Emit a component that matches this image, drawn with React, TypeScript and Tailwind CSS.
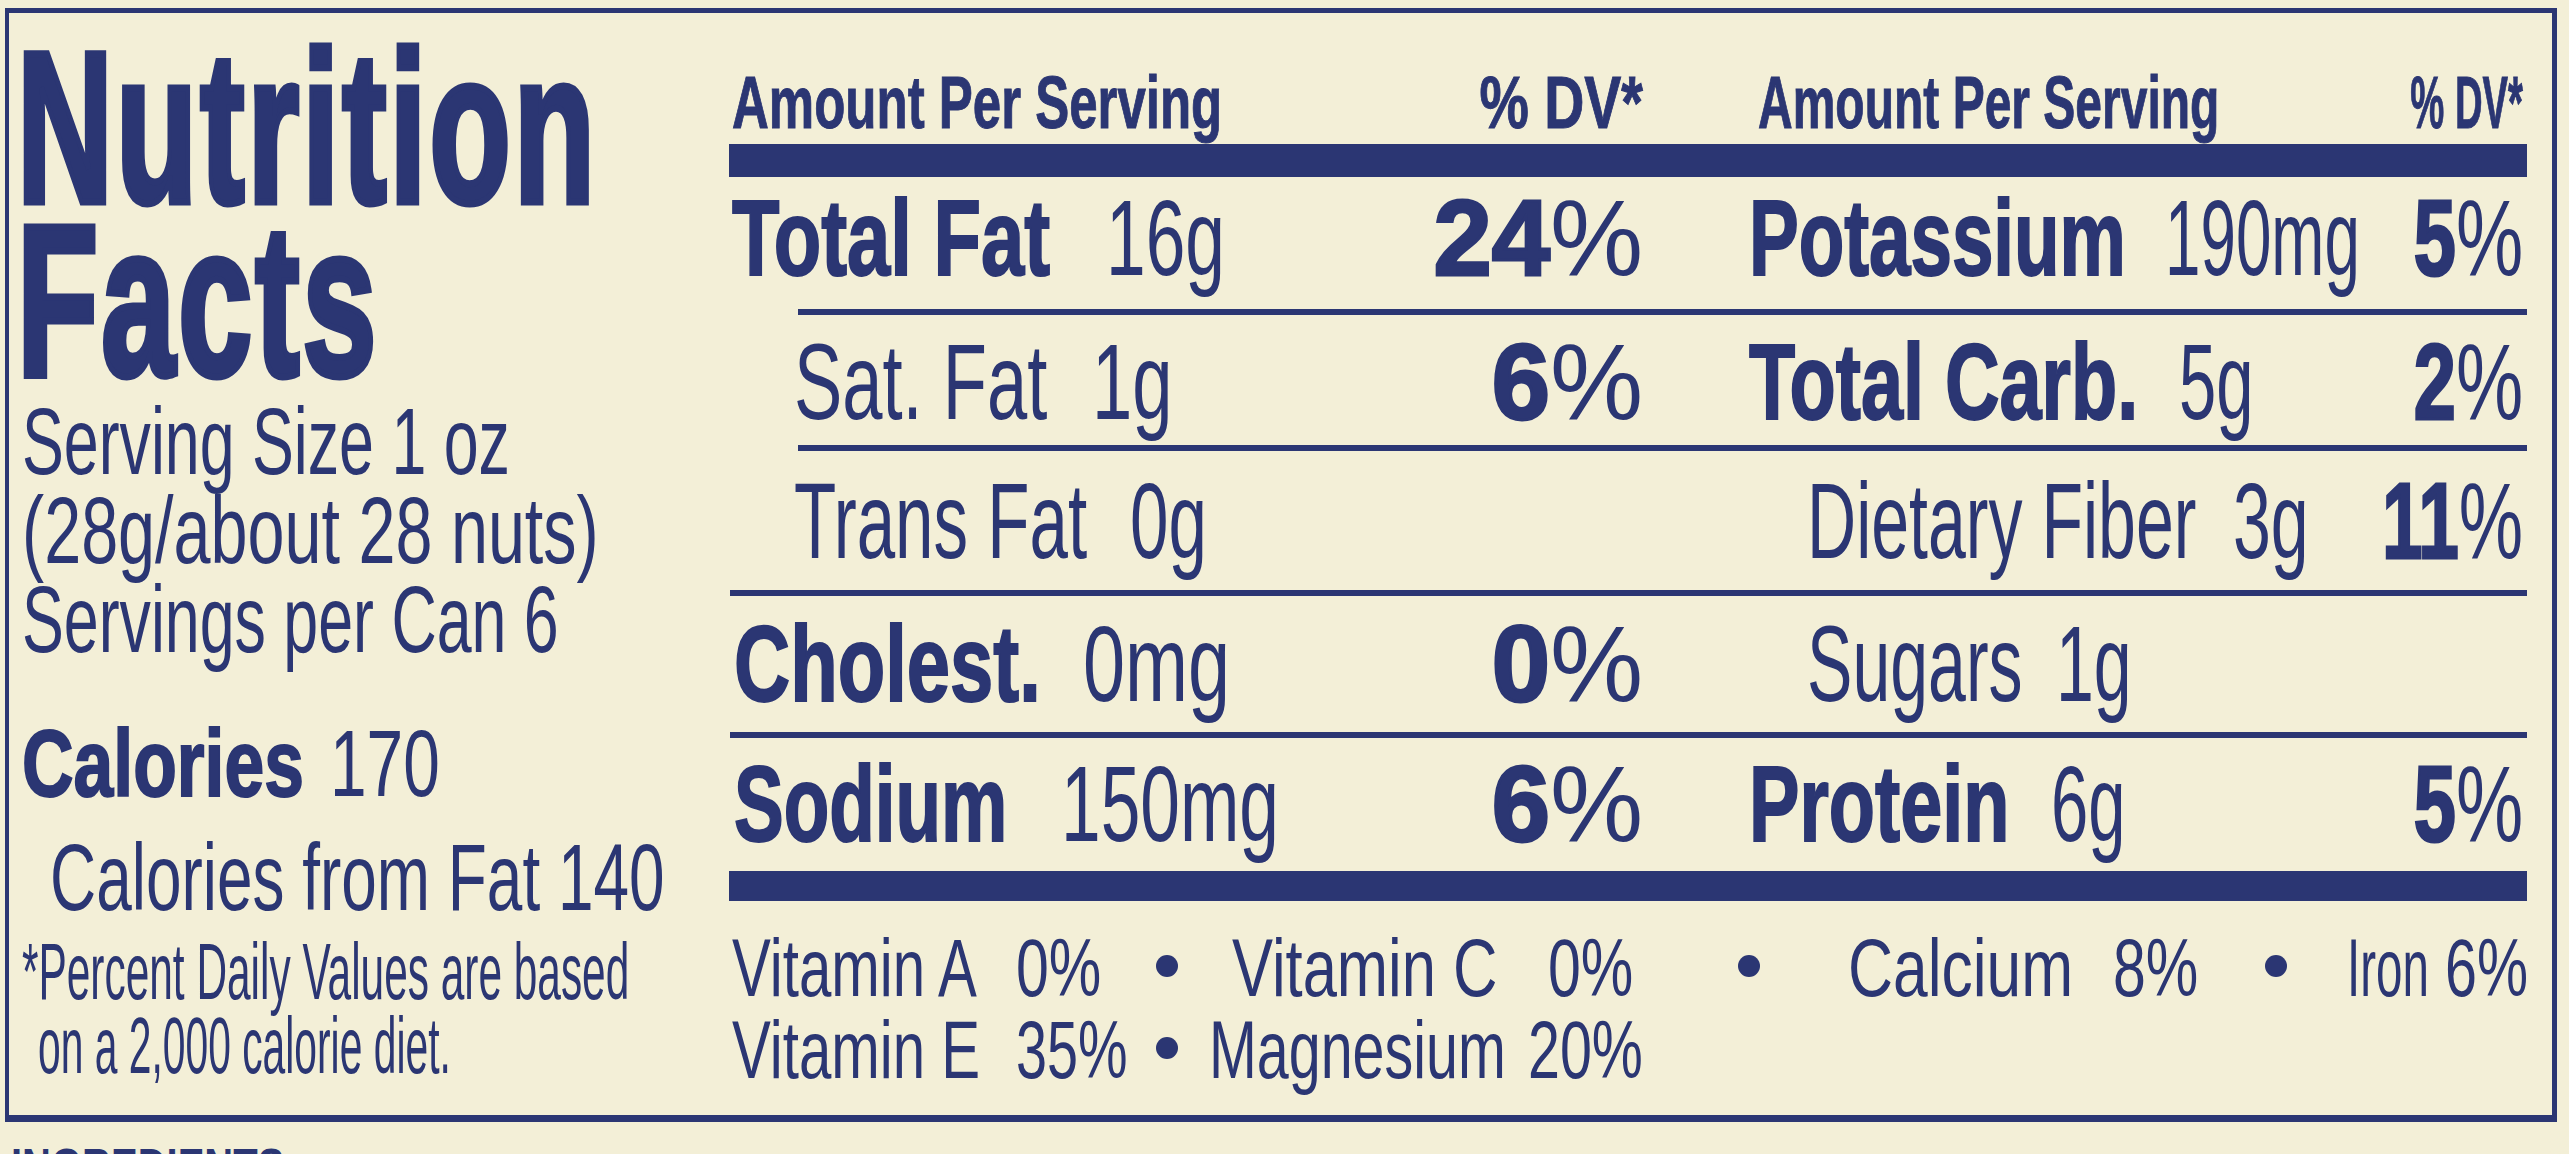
import type { ReactNode } from "react"

type SqProps = {
  w?: string
  sx: string
  right?: boolean
  className?: string
  children: ReactNode
}

// condensed print: text squeezed sideways inside a fixed slot
function Sq({ w = "", sx, right = false, className = "", children }: SqProps) {
  return (
    <span className={`inline-flex shrink-0 ${right ? "justify-end" : ""} ${w}`}>
      <span className={`inline-block whitespace-nowrap ${right ? "origin-right" : "origin-left"} ${sx} ${className}`}>
        {children}
      </span>
    </span>
  )
}

function Pct({ v, sx }: { v: string; sx: string }) {
  return (
    <Sq right w="ml-auto w-0" sx={sx}>
      <span className="font-bold [-webkit-text-stroke:3px_#2b3673]">{v}</span>%
    </Sq>
  )
}

function Row({ h, children }: { h: string; children: ReactNode }) {
  return (
    <div className={`grid grid-cols-[914px_779px] gap-x-[105px] items-end text-[108px] leading-none ${h}`}>
      {children}
    </div>
  )
}

function Rule({ indent = false }: { indent?: boolean }) {
  return <div className={`h-[6px] bg-[#2b3673] ${indent ? "ml-[69px]" : "ml-[1px]"}`} />
}

function Dot({ w }: { w: string }) {
  return (
    <span className={`shrink-0 ${w}`}>
      <span className="inline-block w-[22px] h-[22px] ml-[4px] mb-[19px] rounded-full bg-[#2b3673]" />
    </span>
  )
}

const heavy = "font-bold [-webkit-text-stroke:2px_#2b3673]"

export default function App() {
  return (
    <div className="w-[2569px] h-[1154px] overflow-hidden bg-[#f3efd7] text-[#2b3673] font-['Liberation_Sans',Arial,sans-serif] pt-[8px] pl-[5px]">
      <div className="flex w-[2552px] h-[1114px] border-t-[5px] border-l-[4px] border-r-[5px] border-b-[7px] border-[#2b3673]">
        {/* left column */}
        <div className="w-[720px] shrink-0 pl-[8px] pt-[28px]">
          <div className="text-[216px] leading-[173px] font-bold tracking-[5px] [-webkit-text-stroke:7px_#2b3673]">
            <div><Sq sx="scale-x-[0.615]">Nutrition</Sq></div>
            <div><Sq sx="scale-x-[0.615]">Facts</Sq></div>
          </div>
          <div className="mt-[10px] pl-[5px] text-[95px] leading-[89px]">
            <div><Sq sx="scale-x-[0.66]">Serving Size 1 oz</Sq></div>
            <div><Sq sx="scale-x-[0.70]">(28g/about 28 nuts)</Sq></div>
            <div><Sq sx="scale-x-[0.66]">Servings per Can 6</Sq></div>
          </div>
          <div className="mt-[55px] pl-[5px] text-[94px] leading-[89px]">
            <div className="flex items-baseline">
              <Sq w="w-[308px]" sx="scale-x-[0.76]" className={heavy}>Calories</Sq>
              <Sq sx="scale-x-[0.70]">170</Sq>
            </div>
          </div>
          <div className="mt-[25px] pl-[33px] text-[94px] leading-[89px]">
            <Sq sx="scale-x-[0.68]">Calories from Fat 140</Sq>
          </div>
          <div className="mt-[13px] pl-[5px] text-[80px] leading-[74px]">
            <div><Sq sx="scale-x-[0.53]">*Percent Daily Values are based</Sq></div>
            <div className="pl-[16px]"><Sq sx="scale-x-[0.51]">on a 2,000 calorie diet.</Sq></div>
          </div>
        </div>

        {/* amounts */}
        <div className="w-[1798px] shrink-0 flex flex-col">
          <div className="grid grid-cols-[914px_779px] gap-x-[105px] items-end h-[131px] pb-[4px] text-[75px] leading-none font-bold [-webkit-text-stroke:1px_#2b3673]">
            <div className="flex items-baseline pl-[3px]">
              <Sq w="w-[500px]" sx="scale-x-[0.68]">Amount Per Serving</Sq>
              <Sq right w="ml-auto w-0" sx="scale-x-[0.74]">% DV*</Sq>
            </div>
            <div className="flex items-baseline pl-[10px] pr-[4px]">
              <Sq w="w-[470px]" sx="scale-x-[0.64]">Amount Per Serving</Sq>
              <Sq right w="ml-auto w-0" sx="scale-x-[0.51]">% DV*</Sq>
            </div>
          </div>
          <div className="h-[33px] bg-[#2b3673]" />

          <Row h="h-[132px] pb-[17px]">
            <div className="flex items-baseline pl-[3px]">
              <Sq w="w-[374px]" sx="scale-x-[0.72]" className={heavy}>Total Fat</Sq>
              <Sq sx="scale-x-[0.66]">16g</Sq>
              <Pct v="24" sx="scale-x-[0.97]" />
            </div>
            <div className="flex items-baseline pl-[1px] pr-[4px]">
              <Sq w="w-[416px]" sx="scale-x-[0.69]" className={heavy}>Potassium</Sq>
              <Sq sx="scale-x-[0.59]">190mg</Sq>
              <Pct v="5" sx="scale-x-[0.70]" />
            </div>
          </Row>
          <Rule indent />

          <Row h="h-[130px] pb-[9px]">
            <div className="flex items-baseline pl-[65px]">
              <Sq w="w-[298px]" sx="scale-x-[0.67]">Sat. Fat</Sq>
              <Sq sx="scale-x-[0.67]">1g</Sq>
              <Pct v="6" sx="scale-x-[0.97]" />
            </div>
            <div className="flex items-baseline pl-[1px] pr-[4px]">
              <Sq w="w-[430px]" sx="scale-x-[0.70]" className={heavy}>Total Carb.</Sq>
              <Sq sx="scale-x-[0.62]">5g</Sq>
              <Pct v="2" sx="scale-x-[0.70]" />
            </div>
          </Row>
          <Rule indent />

          <Row h="h-[139px] pb-[15px]">
            <div className="flex items-baseline pl-[65px]">
              <Sq w="w-[336px]" sx="scale-x-[0.64]">Trans Fat</Sq>
              <Sq sx="scale-x-[0.64]">0g</Sq>
            </div>
            <div className="flex items-baseline pl-[59px] pr-[4px]">
              <Sq w="w-[426px]" sx="scale-x-[0.63]">Dietary Fiber</Sq>
              <Sq sx="scale-x-[0.63]">3g</Sq>
              <Pct v="11" sx="scale-x-[0.67]" />
            </div>
          </Row>
          <Rule />

          <Row h="h-[136px] pb-[14px]">
            <div className="flex items-baseline pl-[5px]">
              <Sq w="w-[349px]" sx="scale-x-[0.72]" className={heavy}>Cholest.</Sq>
              <Sq sx="scale-x-[0.70]">0mg</Sq>
              <Pct v="0" sx="scale-x-[0.97]" />
            </div>
            <div className="flex items-baseline pl-[59px] pr-[4px]">
              <Sq w="w-[249px]" sx="scale-x-[0.63]">Sugars</Sq>
              <Sq sx="scale-x-[0.63]">1g</Sq>
            </div>
          </Row>
          <Rule />

          <Row h="h-[133px] pb-[13px]">
            <div className="flex items-baseline pl-[5px]">
              <Sq w="w-[327px]" sx="scale-x-[0.69]" className={heavy}>Sodium</Sq>
              <Sq sx="scale-x-[0.66]">150mg</Sq>
              <Pct v="6" sx="scale-x-[0.97]" />
            </div>
            <div className="flex items-baseline pl-[1px] pr-[4px]">
              <Sq w="w-[302px]" sx="scale-x-[0.70]" className={heavy}>Protein</Sq>
              <Sq sx="scale-x-[0.62]">6g</Sq>
              <Pct v="5" sx="scale-x-[0.70]" />
            </div>
          </Row>
          <div className="h-[30px] bg-[#2b3673]" />

          <div className="mt-[26px] text-[82px] leading-[82px]">
            <div className="flex items-baseline pl-[3px]">
              <Sq w="w-[284px]" sx="scale-x-[0.71]">Vitamin A</Sq>
              <Sq w="w-[136px]" sx="scale-x-[0.72]">0%</Sq>
              <Dot w="w-[80px]" />
              <Sq w="w-[316px]" sx="scale-x-[0.75]">Vitamin C</Sq>
              <Sq w="w-[186px]" sx="scale-x-[0.72]">0%</Sq>
              <Dot w="w-[114px]" />
              <Sq w="w-[265px]" sx="scale-x-[0.76]">Calcium</Sq>
              <Sq w="w-[148px]" sx="scale-x-[0.72]">8%</Sq>
              <Dot w="w-[86px]" />
              <Sq w="w-[98px]" sx="scale-x-[0.58]">Iron</Sq>
              <Sq sx="scale-x-[0.70]">6%</Sq>
            </div>
            <div className="flex items-baseline pl-[3px]">
              <Sq w="w-[284px]" sx="scale-x-[0.71]">Vitamin E</Sq>
              <Sq w="w-[136px]" sx="scale-x-[0.68]">35%</Sq>
              <Dot w="w-[57px]" />
              <Sq w="w-[319px]" sx="scale-x-[0.70]">Magnesium</Sq>
              <Sq sx="scale-x-[0.70]">20%</Sq>
            </div>
          </div>
        </div>
      </div>
      <div className="mt-[20px] pl-[6px] text-[50px] leading-none font-bold">
        <Sq sx="scale-x-[0.8]">INGREDIENTS:</Sq>
      </div>
    </div>
  )
}
